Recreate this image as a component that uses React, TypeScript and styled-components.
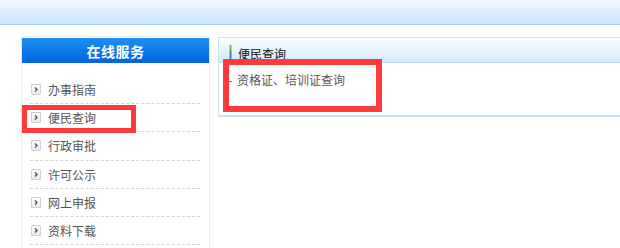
import React from "react";
import styled, { createGlobalStyle } from "styled-components";

const Global = createGlobalStyle`
  html, body { margin: 0; padding: 0; background: #fff; overflow: hidden; }
  body { font-family: "Noto Sans CJK SC", "Noto Sans", sans-serif; }
`;

const Page = styled.div`
  position: relative;
  width: 620px;
  height: 248px;
  overflow: hidden;
`;

const Banner = styled.div`
  height: 24px;
  background: linear-gradient(#f2f9ff, #c6e5ff);
  border-bottom: 1px solid #a6d2f7;
`;

const Main = styled.div`
  display: flex;
  align-items: flex-start;
  gap: 8px;
  padding: 11px 0 0 21px;
  width: 760px;
`;

const Sidebar = styled.div`
  width: 187px;
  height: 240px;
  border: 1px solid #ececec;
  padding: 1px 0 0 0;
  flex: none;
`;

const SideHead = styled.div`
  height: 25px;
  background: linear-gradient(#1c8ff2, #0064e0);
  color: #fff;
  font-size: 14px;
  font-weight: bold;
  display: flex;
  align-items: center;
  justify-content: center;
  letter-spacing: 0.5px;
`;

const MenuList = styled.ul`
  list-style: none;
  margin: 0;
  padding: 13px 9px 0 8px;
`;

const MenuItem = styled.li`
  height: 27.2px;
  border-bottom: 1px dashed #d4d4d4;
  display: flex;
  align-items: center;
  gap: 7px;
  padding-left: 1px;
  font-size: 12px;
  color: #555;
`;

const Arrow = styled.span`
  width: 8px;
  height: 9px;
  border: 1px solid #cfcfcf;
  border-radius: 1px;
  background: linear-gradient(#ffffff, #e8e8e8);
  display: flex;
  align-items: center;
  justify-content: center;
  flex: none;
`;

const Content = styled.div`
  width: 480px;
  border: 1px solid #c9e2f8;
  border-bottom-width: 2px;
  margin-top: 1px;
`;

const ContentHead = styled.div`
  height: 25px;
  box-sizing: border-box;
  background: linear-gradient(#fdfeff, #d3e9fc);
  border-bottom: 1px solid #b9d9f6;
  display: flex;
  align-items: center;
  gap: 6px;
  padding: 6px 0 0 10px;
  font-size: 12px;
  color: #111;
`;

const ContentBody = styled.div`
  height: 52px;
  padding: 7px 0 0 10px;
  box-sizing: border-box;
`;

const Row = styled.div`
  display: flex;
  align-items: center;
  gap: 5px;
  font-size: 12px;
  color: #555;
  height: 19px;
`;

const Dot = styled.span`
  width: 3px;
  height: 1px;
  background: #777;
  margin-top: 4px;
`;

const Mark = styled.div<{ $left: number; $top: number; $w: number; $h: number; $b: number }>`
  position: absolute;
  left: ${(p) => p.$left}px;
  top: ${(p) => p.$top}px;
  width: ${(p) => p.$w}px;
  height: ${(p) => p.$h}px;
  border: ${(p) => p.$b}px solid #ff3a3a;
  box-sizing: border-box;
`;

const items = ["办事指南", "便民查询", "行政审批", "许可公示", "网上申报", "资料下载"];

export default function App() {
  return (
    <Page>
      <Global />
      <Banner />
      <Main>
        <Sidebar>
          <SideHead>在线服务</SideHead>
          <MenuList>
            {items.map((t) => (
              <MenuItem key={t}>
                <Arrow>
                  <svg width="6" height="7" viewBox="0 0 6 7">
                    <path d="M2 1.5 L4 3.5 L2 5.5" stroke="#2b4f8a" strokeWidth="1.3" fill="none" />
                  </svg>
                </Arrow>
                {t}
              </MenuItem>
            ))}
          </MenuList>
        </Sidebar>
        <Content>
          <ContentHead>
            <svg width="3" height="16" viewBox="0 0 3 16">
              <rect x="0.5" y="0" width="2" height="7" fill="#6ac22e" />
              <path d="M0.5 7 L2.5 6 L2.5 16 L0.5 16 Z" fill="#2a8ad8" />
            </svg>
            便民查询
          </ContentHead>
          <ContentBody>
            <Row>
              <Dot />
              资格证、培训证查询
            </Row>
          </ContentBody>
        </Content>
      </Main>
      <Mark $left={22} $top={105} $w={114} $h={28} $b={5} />
      <Mark $left={223} $top={59} $w={159} $h={53} $b={6} />
    </Page>
  );
}
